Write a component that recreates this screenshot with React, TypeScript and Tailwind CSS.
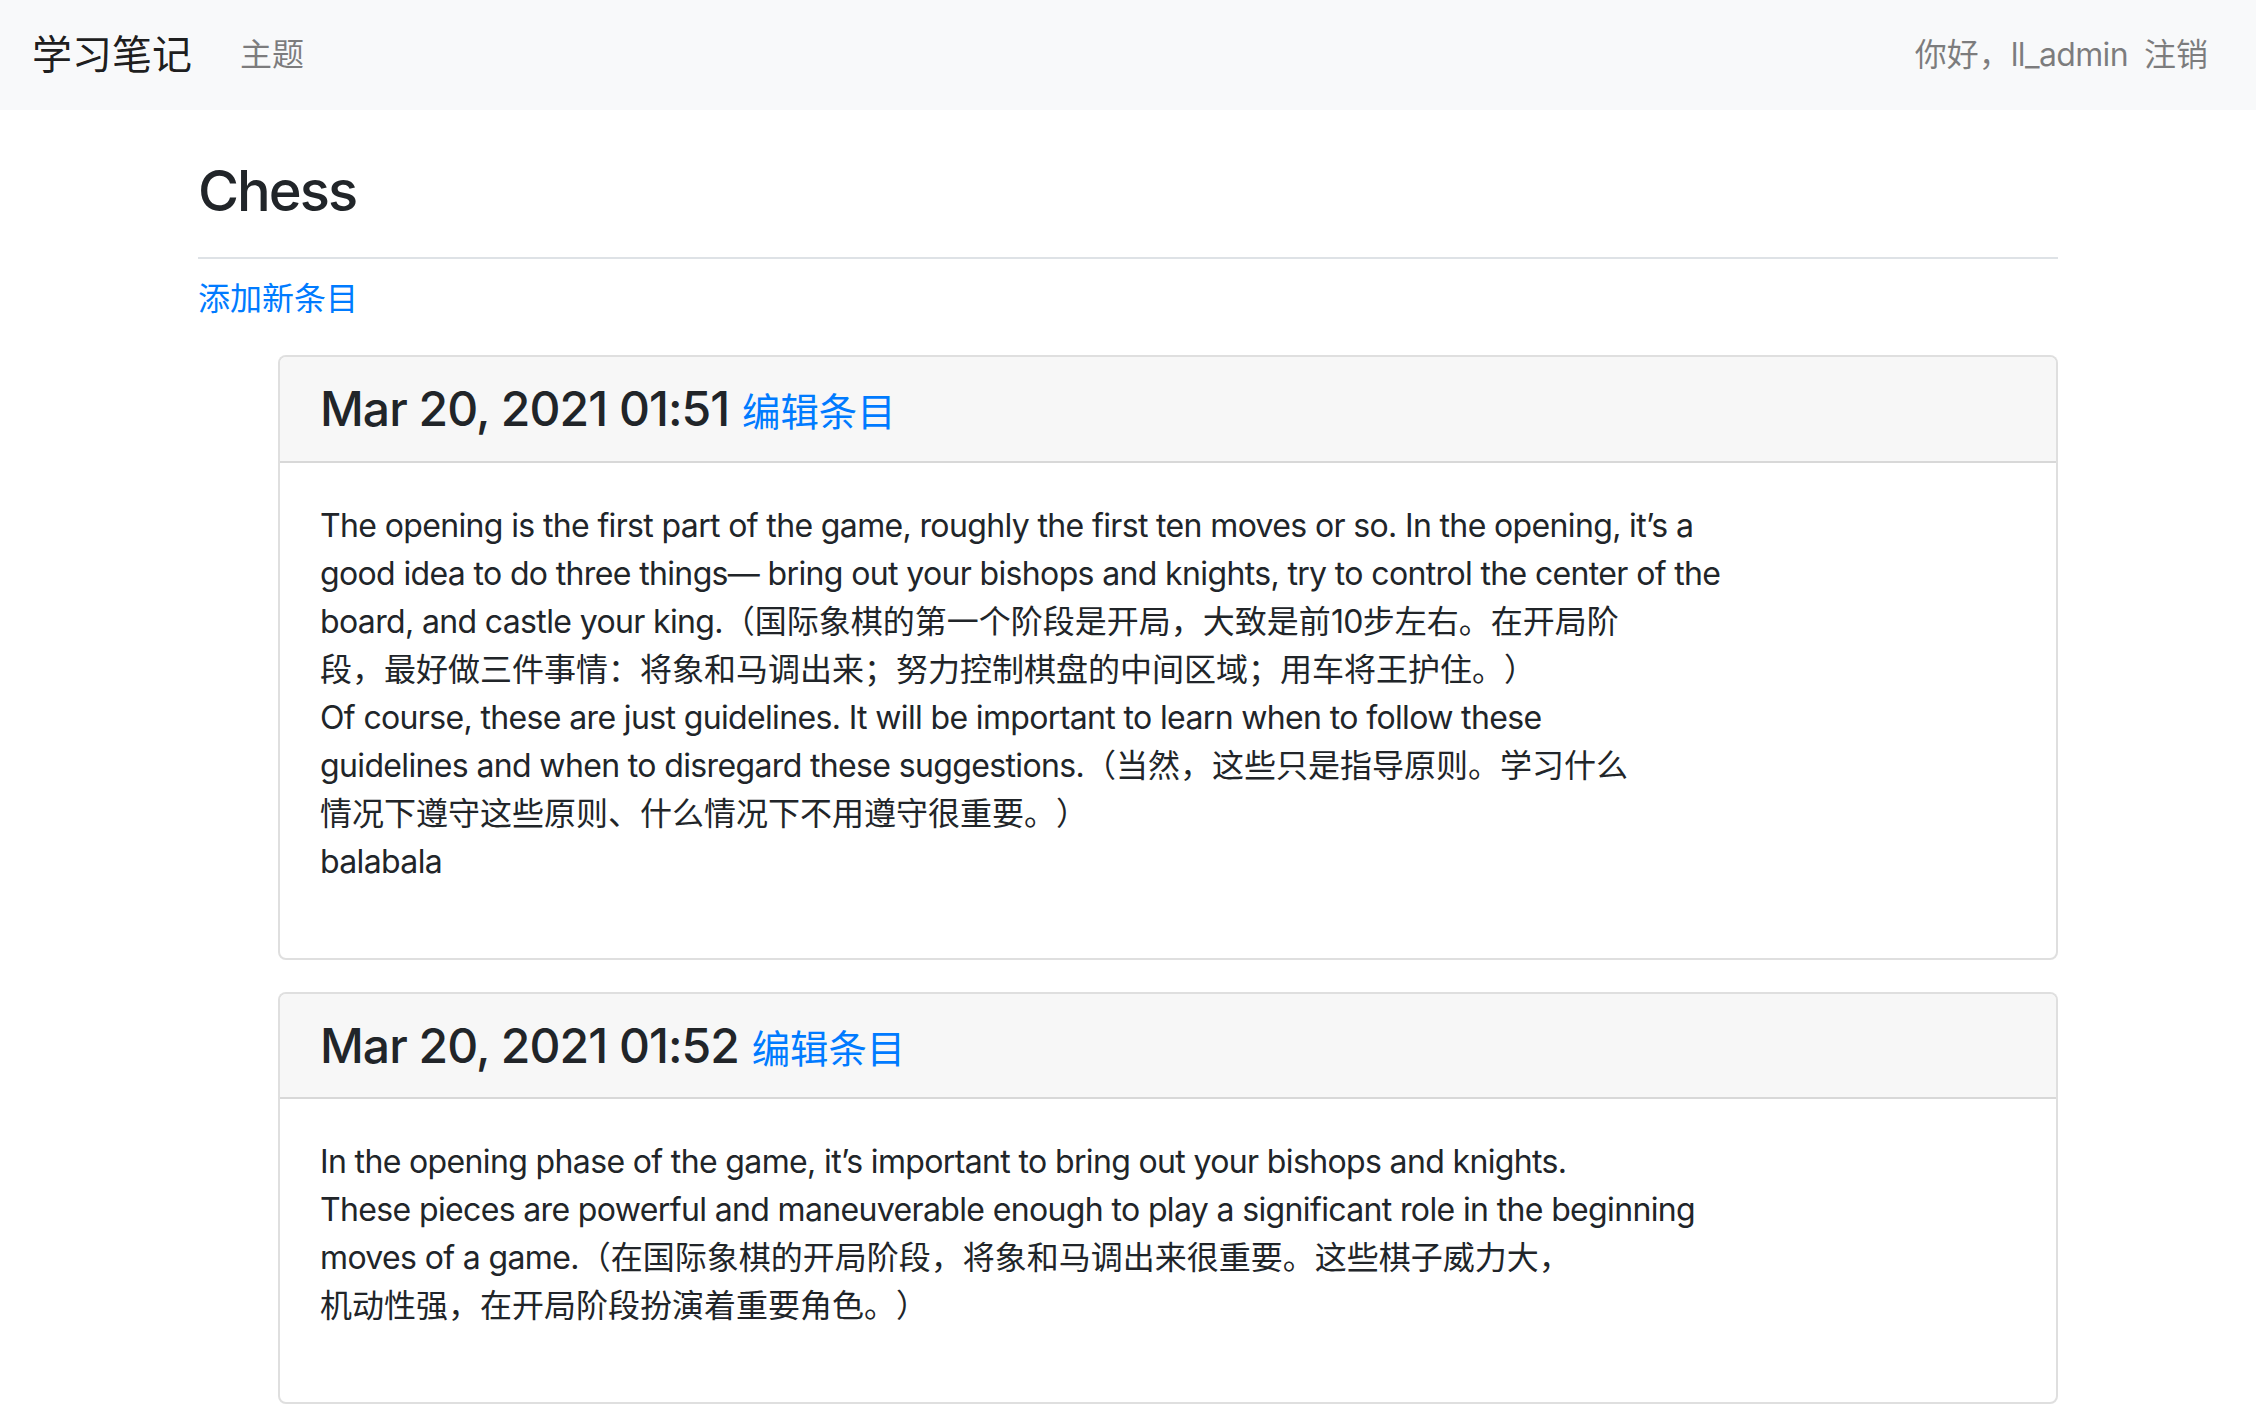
import React from "react";

type Entry = {
  date: string;
  lines: string[];
};

const entries: Entry[] = [
  {
    date: "Mar 20, 2021 01:51",
    lines: [
      "The opening is the first part of the game, roughly the first ten moves or so. In the opening, it’s a",
      "good idea to do three things— bring out your bishops and knights, try to control the center of the",
      "board, and castle your king.（国际象棋的第一个阶段是开局，大致是前10步左右。在开局阶",
      "段，最好做三件事情：将象和马调出来；努力控制棋盘的中间区域；用车将王护住。）",
      "Of course, these are just guidelines. It will be important to learn when to follow these",
      "guidelines and when to disregard these suggestions.（当然，这些只是指导原则。学习什么",
      "情况下遵守这些原则、什么情况下不用遵守很重要。）",
      "balabala",
    ],
  },
  {
    date: "Mar 20, 2021 01:52",
    lines: [
      "In the opening phase of the game, it’s important to bring out your bishops and knights.",
      "These pieces are powerful and maneuverable enough to play a significant role in the beginning",
      "moves of a game.（在国际象棋的开局阶段，将象和马调出来很重要。这些棋子威力大，",
      "机动性强，在开局阶段扮演着重要角色。）",
    ],
  },
];

// latin runs get tightened, CJK runs keep their natural width
const cjk = /([\u3000-\u303f\u4e00-\u9fff\uff00-\uffef]+)/;

function Mixed({ text }: { text: string }) {
  return (
    <>
      {text.split(cjk).map((part, i) =>
        cjk.test(part) ? (
          <span key={i} className="tracking-normal">
            {part}
          </span>
        ) : (
          <React.Fragment key={i}>{part}</React.Fragment>
        )
      )}
    </>
  );
}

function EntryCard({ entry }: { entry: Entry }) {
  return (
    <li className="mb-[32px] rounded-[8px] border-2 border-[rgba(0,0,0,0.125)] bg-white">
      <div className="rounded-t-[6px] border-b-2 border-[rgba(0,0,0,0.125)] bg-[#f7f7f7] px-[40px] py-[23px]">
        <h4 className="text-[48px] font-medium leading-[1.2]">
          <span className="tracking-[-0.02em]">{entry.date}</span>{" "}
          <small className="text-[38.4px] font-normal">
            <a href="#" className="text-[#007bff]">
              编辑条目
            </a>
          </small>
        </h4>
      </div>
      <div className="px-[40px] pb-[40px] pt-[39px]">
        <p className="mb-[32px] whitespace-nowrap text-[32px] leading-[48px] tracking-[-0.02em]">
          {entry.lines.map((line, i) => (
            <React.Fragment key={i}>
              <Mixed text={line} />
              {i < entry.lines.length - 1 && <br />}
            </React.Fragment>
          ))}
        </p>
      </div>
    </li>
  );
}

export default function App() {
  return (
    <div className="min-h-screen bg-white font-['Inter','Noto_Sans_CJK_SC',sans-serif] text-[#212529] [text-spacing-trim:space-all]">
      <nav className="mb-[48px] flex items-center justify-between bg-[#f8f9fa] px-[32px] py-[15px]">
        <div className="flex items-center">
          <a href="#" className="mr-[32px] py-[10px] text-[40px] leading-[60px] text-[rgba(0,0,0,0.9)]">
            学习笔记
          </a>
          <a href="#" className="px-[16px] py-[16px] text-[32px] leading-[48px] text-[rgba(0,0,0,0.5)]">
            主题
          </a>
        </div>
        <div className="flex items-center text-[32px] leading-[48px] text-[rgba(0,0,0,0.5)]">
          <span className="py-[16px]">
            你好，<span className="tracking-[-0.02em]">ll_admin</span>
          </span>
          <a href="#" className="px-[16px] py-[16px]">
            注销
          </a>
        </div>
      </nav>

      <main className="mx-auto w-[1920px] px-[30px]">
        <div className="mb-[16px] border-b-2 border-[#dee2e6] pb-[16px]">
          <h3 className="mb-[16px] text-[56px] font-medium leading-[1.2] tracking-[-0.035em]">Chess</h3>
        </div>
        <p className="mb-[32px] text-[32px] leading-[48px]">
          <a href="#" className="text-[#007bff]">
            添加新条目
          </a>
        </p>
        <ul className="pl-[80px]">
          {entries.map((e) => (
            <EntryCard key={e.date} entry={e} />
          ))}
        </ul>
      </main>
    </div>
  );
}
